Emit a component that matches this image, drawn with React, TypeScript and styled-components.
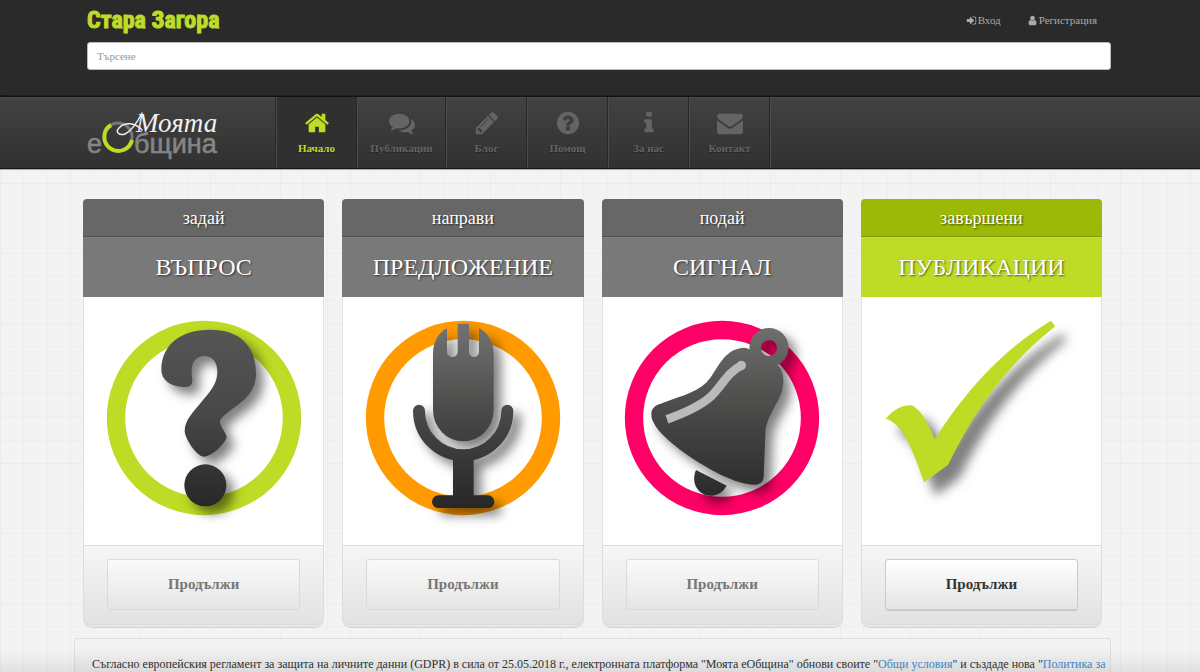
import React from "react";
import styled, { createGlobalStyle, css } from "styled-components";

const LIME = "#bedb26";

const Global = createGlobalStyle`
  *, *::before, *::after { box-sizing: border-box; }
  body {
    margin: 0;
    font-family: "Liberation Serif", "Times New Roman", serif;
    color: #333;
    background-color: #f3f3f3;
    background-image:
      linear-gradient(to right, #ececec 1px, transparent 1px 23px, #eeeeee 23px 24px, transparent 24px 47px, #eeeeee 47px 48px, transparent 48px),
      linear-gradient(to bottom, #ececec 1px, transparent 1px 23px, #eeeeee 23px 24px, transparent 24px 47px, #eeeeee 47px 48px, transparent 48px);
    background-size: 70px 70px;
    background-position: 0 0, 0 43px;
  }
`;

const Page = styled.div`
  min-height: 100vh;
  overflow: hidden;
`;

const BottomFade = styled.div`
  position: fixed;
  left: 0;
  right: 0;
  bottom: 0;
  height: 22px;
  pointer-events: none;
  background: linear-gradient(rgba(0, 0, 0, 0), rgba(0, 0, 0, 0.07));
`;

const Top = styled.header`
  height: 96px;
  padding: 7px 89px 0 87px;
  background: #2a2a2a;
  border-bottom: 1px dotted #111;
`;

const TopRow = styled.div`
  display: flex;
  justify-content: space-between;
  align-items: center;
  height: 26px;
`;

const City = styled.a`
  font: bold 24px/26px "Liberation Sans Narrow", "Roboto Condensed", "Liberation Sans", sans-serif;
  color: ${LIME};
  -webkit-text-stroke: 1px ${LIME};
  text-decoration: none;
`;

const Account = styled.nav`
  display: flex;
  gap: 26px;
  padding-right: 14px;
`;

const AccountLink = styled.a`
  display: flex;
  align-items: center;
  gap: 1px;
  font-size: 11px;
  line-height: 16px;
  color: #aaa;
  text-decoration: none;
`;

const Search = styled.input`
  display: block;
  width: 100%;
  height: 28px;
  margin-top: 9px;
  padding: 0 9px;
  border: 1px solid #bbb;
  border-radius: 3px;
  background: #fff;
  font: 11px "Liberation Serif", serif;
  color: #555;
  &::placeholder { color: #999; opacity: 1; }
`;

const Bar = styled.div`
  display: flex;
  height: 73px;
  padding-left: 87px;
  background: linear-gradient(#424242, #313131);
  border-top: 1px solid #111;
  border-bottom: 1px solid #161616;
  box-shadow: inset 0 1px 0 #4c4c4c, 0 1px 0 #aaa;
`;

const Brand = styled.a`
  flex: none;
  width: 188px;
  padding-top: 9px;
`;

const Menu = styled.nav`
  display: flex;
  border-left: 1px solid #282828;
  border-right: 1px solid #4b4b4b;
`;

const MenuLink = styled.a<{ $active?: boolean; $wide?: boolean }>`
  display: flex;
  flex-direction: column;
  align-items: center;
  width: ${(p) => (p.$wide ? 89 : 81)}px;
  padding-top: 13px;
  gap: 4px;
  border-left: 1px solid #4b4b4b;
  border-right: 1px solid #282828;
  font-size: 11px;
  font-weight: bold;
  line-height: 16px;
  text-decoration: none;
  color: ${(p) => (p.$active ? LIME : "#646464")};
  text-shadow: 0 1px 1px #222;
  ${(p) => p.$active && css`background: #303030;`}
`;

const Cards = styled.main`
  display: grid;
  grid-template-columns: repeat(4, minmax(0, 1fr));
  gap: 18px;
  padding: 30px 98px 0 83px;
`;

const Card = styled.section`
  border-radius: 5px 5px 9px 9px;
  background: #e6e6e6;
  border-bottom: 1px solid #d2d2d2;
  padding-bottom: 2px;
`;

const Kicker = styled.p<{ $lime?: boolean }>`
  margin: 0;
  height: 38px;
  border-radius: 4px 4px 0 0;
  border-bottom: 1px solid ${(p) => (p.$lime ? "#7f9700" : "#515151")};
  background: ${(p) => (p.$lime ? "#9db907" : "#676767")};
  color: #fff;
  font-size: 18px;
  line-height: 38px;
  text-align: center;
  text-shadow: 1px 1px 2px rgba(0, 0, 0, 0.6);
`;

const Title = styled.h2<{ $lime?: boolean }>`
  margin: 0;
  height: 60px;
  background: ${(p) => (p.$lime ? LIME : "#797979")};
  border-top: 1px solid ${(p) => (p.$lime ? "#c8e23f" : "#828282")};
  color: #fff;
  font-size: 24px;
  font-weight: normal;
  line-height: 58px;
  text-align: center;
  text-shadow: 1px 1px 2px rgba(0, 0, 0, 0.6);
`;

const Picture = styled.div`
  display: flex;
  justify-content: center;
  padding: 13px 0 15px;
  background: #fff;
  border: solid #e3e3e3;
  border-width: 0 1px;
  svg { flex: none; display: block; }
`;

const CardFoot = styled.div`
  padding: 13px 23px 14px;
  border: 1px solid #dcdcdc;
  border-radius: 0 0 7px 7px;
  background: linear-gradient(#f6f6f6, #e2e2e2);
`;

const Continue = styled.button<{ $ready?: boolean }>`
  display: block;
  width: 100%;
  height: 51px;
  border: 1px solid ${(p) => (p.$ready ? "#ccc" : "#dadada")};
  border-radius: 3px;
  background: ${(p) => (p.$ready ? "linear-gradient(#fff, #e4e4e4)" : "linear-gradient(#fafafa, #e5e5e5)")};
  box-shadow: ${(p) => (p.$ready ? "0 1px 1px rgba(0,0,0,.15)" : "none")};
  font: bold 15px "Liberation Serif", serif;
  color: ${(p) => (p.$ready ? "#333" : "#777")};
`;

const Notice = styled.aside`
  margin: 10px 89px 0 74px;
  padding: 18px 17px 0;
  border: 1px solid #dedede;
  border-bottom: 0;
  border-radius: 4px 4px 0 0;
  background: linear-gradient(#f4f4f4, #ececec);
  font-size: 12px;
  line-height: 15px;
  white-space: nowrap;
  a { color: #428bca; text-decoration: none; }
`;

const paths = {
  home: "M1472 992v480q0 26-19 45t-45 19h-384v-384h-256v384h-384q-26 0-45-19t-19-45v-480q0-1 .5-3t.5-3l575-474 575 474q1 2 1 6zm223-69l-62 74q-8 9-21 11h-3q-13 0-21-7l-692-577-692 577q-12 8-24 7-13-2-21-11l-62-74q-8-10-7-23.5t11-21.5l719-599q32-26 76-26t76 26l244 204v-195q0-14 9-23t23-9h192q14 0 23 9t9 23v408l219 182q10 8 11 21.5t-7 23.5z",
  comments: "M1408 768q0 139-94 257t-256.5 186.5-353.5 68.5q-86 0-176-16-124 88-278 128-36 9-86 16h-3q-11 0-20.5-8t-11.5-21q-1-3-1-6.5t.5-6.5 2-6l2.5-5 3.5-5.5 4-5 4.5-5 4-4.5q5-6 23-25t26-29.5 22.5-29 25-38.5 20.5-44q-124-72-195-177t-71-224q0-139 94-257t256.5-186.5 353.5-68.5 353.5 68.5 256.5 186.5 94 257zm384 256q0 120-71 224.5t-195 176.5q10 24 20.5 44t25 38.5 22.5 29 26 29.5 23 25q1 1 4 4.5t4.5 5 4 5 3.5 5.5l2.5 5 2 6 .5 6.5-1 6.5q-3 14-13 22t-22 7q-50-7-86-16-154-40-278-128-90 16-176 16-271 0-472-132 58 4 88 4 161 0 309-45t264-129q125-92 192-212t67-254q0-77-23-152 129 71 204 178t75 230z",
  pencil: "M491 1536l91-91-235-235-91 91v107h128v128h107zm523-928q0-22-22-22-10 0-17 7l-542 542q-7 7-7 17 0 22 22 22 10 0 17-7l542-542q7-7 7-17zm-54-192l416 416-832 832h-416v-416zm683 96q0 53-37 90l-166 166-416-416 166-165q36-38 90-38 53 0 91 38l235 234q37 39 37 91z",
  question: "M1024 1376v-192q0-14-9-23t-23-9h-192q-14 0-23 9t-9 23v192q0 14 9 23t23 9h192q14 0 23-9t9-23zm256-672q0-88-55.5-163t-138.5-116-170-41q-243 0-371 213-15 24 8 42l132 100q7 6 19 6 16 0 25-12 53-68 86-92 34-24 86-24 48 0 85.5 26t37.5 59q0 38-20 61t-68 45q-63 28-115.5 86.5t-52.5 125.5v36q0 14 9 23t23 9h192q14 0 23-9t9-23q0-19 21.5-49.5t54.5-49.5q32-18 49-28.5t46-35 44.5-48 28-60.5 12.5-81zm384 192q0 209-103 385.5t-279.5 279.5-385.5 103-385.5-103-279.5-279.5-103-385.5 103-385.5 279.5-279.5 385.5-103 385.5 103 279.5 279.5 103 385.5z",
  info: "M1216 1344v128q0 26-19 45t-45 19h-512q-26 0-45-19t-19-45v-128q0-26 19-45t45-19h64v-384h-64q-26 0-45-19t-19-45v-128q0-26 19-45t45-19h384q26 0 45 19t19 45v576h64q26 0 45 19t19 45zm-128-1152v192q0 26-19 45t-45 19h-256q-26 0-45-19t-19-45v-192q0-26 19-45t45-19h256q26 0 45 19t19 45z",
  envelope: "M1792 710v794q0 66-47 113t-113 47h-1472q-66 0-113-47t-47-113v-794q44 49 101 87 362 246 497 345 57 42 92.5 65.5t94.5 48 110 24.5h2q51 0 110-24.5t94.5-48 92.5-65.5q170-123 498-345 57-39 100-87zm0-294q0 79-49 151t-122 123q-376 261-468 325-10 7-42.5 31t-54 38.5-52 32.5-57.5 27-50 9h-2q-23 0-50-9t-57.5-27-52-32.5-54-38.5-42.5-31q-91-64-262-182.5t-205-142.5q-62-42-117-115.5t-55-136.5q0-78 41.5-130t118.5-52h1472q65 0 112.5 47t47.5 113z",
  user: "M1536 1399q0 109-62.5 187t-150.5 78h-854q-88 0-150.5-78t-62.5-187q0-85 8.5-160.5t31.5-152 58.5-131 94-89 134.5-34.5q131 128 313 128t313-128q76 0 134.5 34.5t94 89 58.5 131 31.5 152 8.5 160.5zm-256-887q0 159-112.5 271.5t-271.5 112.5-271.5-112.5-112.5-271.5 112.5-271.5 271.5-112.5 271.5 112.5 112.5 271.5z",
  signIn: "M1312 896q0 26-19 45l-544 544q-19 19-45 19t-45-19-19-45v-288h-448q-26 0-45-19t-19-45v-384q0-26 19-45t45-19h448v-288q0-26 19-45t45-19 45 19l544 544q19 19 19 45zm352-352v704q0 119-84.5 203.5t-203.5 84.5h-320q-13 0-22.5-9.5t-9.5-22.5q0-4-1-20t-.5-26.5 3-23.5 10-19.5 20.5-6.5h320q66 0 113-47t47-113v-704q0-66-47-113t-113-47h-312l-11.5-1-11.5-3-8-5.5-7-9-2-13.5q0-4-1-20t-.5-26.5 3-23.5 10-19.5 20.5-6.5h320q119 0 203.5 84.5t84.5 203.5z",
};

type IconName = keyof typeof paths;

const Icon = ({ name, size }: { name: IconName; size: number }) => (
  <svg width={size} height={size} viewBox="0 0 1792 1792" fill="currentColor" aria-hidden="true">
    <path d={paths[name]} />
  </svg>
);

const Logo = () => (
  <svg width="140" height="54" viewBox="0 0 140 54" role="img" aria-label="Моята еОбщина">
    <g fill="#858585" stroke="#858585" strokeWidth="0.6" fontFamily="Liberation Sans, sans-serif" fontSize="27">
      <text x="0" y="47">е</text>
      <text x="47" y="47">бщина</text>
    </g>
    <circle cx="31" cy="31" r="14" fill="none" stroke="#777" strokeWidth="3" />
    <path d="M24 19A14 14 0 1 0 45 34" fill="none" stroke={LIME} strokeWidth="4" />
    <path d="M55 7C51 15 46 24 38 28C32 30 28 26 32 22C38 15 49 17 55 24" fill="none" stroke="#eee" strokeWidth="1.5" strokeLinecap="round" />
    <text x="49" y="26" fill="#f0f0f0" fontFamily="Liberation Serif, serif" fontStyle="italic" fontSize="27">Моята</text>
  </svg>
);

const Art = ({ id, left, ring, from, dx = 22, dy = 22, children }: {
  id: string; left: number; ring?: string; from: string; dx?: number; dy?: number; children: React.ReactNode;
}) => (
  <svg width="230" height="220" viewBox={`${left} 0 690 660`} aria-hidden="true">
    <defs>
      <linearGradient id={`${id}-fill`} gradientUnits="userSpaceOnUse" x1="0" y1="50" x2="0" y2="590">
        <stop offset="0" stopColor={from} />
        <stop offset="0.5" stopColor="#484746" />
        <stop offset="1" stopColor="#272727" />
      </linearGradient>
      <filter id={`${id}-shadow`} x="-20%" y="-20%" width="150%" height="150%" colorInterpolationFilters="sRGB">
        <feDropShadow dx={dx} dy={dy} stdDeviation="16" floodColor="#000" floodOpacity="0.5" />
      </filter>
    </defs>
    {ring && <circle cx={left + 345} cy="324" r="264" fill="none" stroke={ring} strokeWidth="55" />}
    <g filter={`url(#${id}-shadow)`} fill={`url(#${id}-fill)`}>{children}</g>
  </svg>
);

const QuestionArt = () => (
  <Art id="question" left={-4} ring={LIME} from="#565656">
    <path d="M213 180C213 105 270 59 360 59C445 59 497 105 497 190C497 245 462 272 425 298C400 317 389 325 389 338C392 352 408 370 409 382C405 400 365 440 341 440C320 440 283 385 283 362C283 330 310 305 338 270C368 235 381 215 381 185C381 152 362 138 342 138C315 138 303 160 304 188C304 200 307 210 306 215C304 230 290 231 278 231C240 229 213 210 213 180Z" />
    <circle cx="345" cy="526" r="63" />
  </Art>
);

const MicArt = () => (
  <Art id="mic" left={-6} ring="#ff9a00" from="#717171">
    <path d="M249 130C249 95 268 67 291 55V125a16 16 0 0 0 32 0V41H357V125a15 16 0 0 0 30 0V55C412 67 431 95 431 130V300a91 94 0 0 1-182 0Z" />
    <path d="M207 302a132 133 0 0 0 265 0" fill="none" stroke="url(#mic-fill)" strokeWidth="36" strokeLinecap="round" />
    <path d="M309 440H371V556H414a19 19 0 0 1 0 38H265a19 19 0 0 1 0-38H309Z" />
  </Art>
);

const BellArt = () => (
  <Art id="bell" left={-9} ring="#ff0066" from="#6f6f6e">
    <path fillRule="evenodd" d="M477 54a58 58 0 1 1 0 117a58 58 0 1 1 0-117ZM477 90a24 24 0 1 0 0 48a24 24 0 1 0 0-48Z" />
    <path d="M124 312C124 292 138 285 160 278C220 257 272 243 300 205C328 165 345 118 400 113C412 113 418 117 424 122C434 155 465 175 503 165C527 190 524 235 505 270C480 315 467 340 466 370L461 500C460 520 445 524 430 524C350 524 160 400 132 340C126 330 124 322 124 312Z" />
    <path d="M258 480L350 527C335 555 308 560 290 556C260 547 243 515 258 480Z" />
    <path fill="none" stroke="#b9bbba" strokeWidth="26" d="M171 328C225 309 268 290 300 262C335 230 352 186 395 166" />
    <circle fill="#b9bbba" cx="394" cy="166" r="14" />
    <path fill="#b9bbba" d="M453 119Q465 126 483 137Q461 139 453 119Z" />
  </Art>
);

const CheckArt = () => (
  <Art id="check" left={49} from="#565656" dx={34} dy={40}>
    <path fill={LIME} d="M108 326C140 292 165 283 190 287C220 305 240 350 255 388C330 270 440 130 604 32L617 49C470 165 375 300 295 465L223 517C200 450 165 340 108 326Z" />
  </Art>
);

const menu: { icon: IconName; label: string; wide?: boolean }[] = [
  { icon: "home", label: "Начало" },
  { icon: "comments", label: "Публикации", wide: true },
  { icon: "pencil", label: "Блог" },
  { icon: "question", label: "Помощ" },
  { icon: "info", label: "За нас" },
  { icon: "envelope", label: "Контакт" },
];

const cards = [
  { kicker: "задай", title: "ВЪПРОС", art: <QuestionArt /> },
  { kicker: "направи", title: "ПРЕДЛОЖЕНИЕ", art: <MicArt /> },
  { kicker: "подай", title: "СИГНАЛ", art: <BellArt /> },
  { kicker: "завършени", title: "ПУБЛИКАЦИИ", art: <CheckArt />, lime: true },
];

export default function App() {
  return (
    <Page>
      <Global />
      <Top>
        <TopRow>
          <City href="#">Стара Загора</City>
          <Account>
            <AccountLink href="#"><Icon name="signIn" size={11} />Вход</AccountLink>
            <AccountLink href="#"><Icon name="user" size={11} />Регистрация</AccountLink>
          </Account>
        </TopRow>
        <Search type="search" placeholder="Търсене" aria-label="Търсене" />
      </Top>
      <Bar>
        <Brand href="#"><Logo /></Brand>
        <Menu>
          {menu.map((m, i) => (
            <MenuLink key={m.label} href="#" $active={i === 0} $wide={m.wide}>
              <Icon name={m.icon} size={26} />
              {m.label}
            </MenuLink>
          ))}
        </Menu>
      </Bar>
      <Cards>
        {cards.map((c) => (
          <Card key={c.title}>
            <Kicker $lime={c.lime}>{c.kicker}</Kicker>
            <Title $lime={c.lime}>{c.title}</Title>
            <Picture>{c.art}</Picture>
            <CardFoot>
              <Continue type="button" $ready={c.lime}>Продължи</Continue>
            </CardFoot>
          </Card>
        ))}
      </Cards>
      <Notice>
        Съгласно европейския регламент за защита на личните данни (GDPR) в сила от 25.05.2018 г., електронната платформа "Моята еОбщина" обнови своите "<a href="#">Общи условия</a>" и създаде нова "<a href="#">Политика за</a>
      </Notice>
      <BottomFade />
    </Page>
  );
}
